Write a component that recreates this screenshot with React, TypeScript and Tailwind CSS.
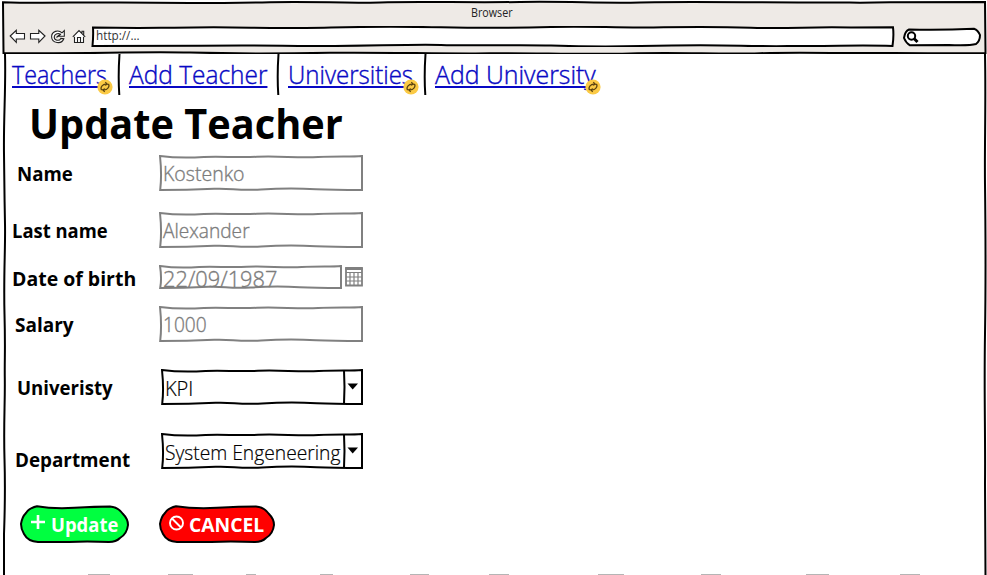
import { useLayoutEffect, useRef, useState } from "react";
import type { ReactNode } from "react";

/** A single line of text, condensed or widened to an exact width. */
function Fit({ w, className = "", children }: { w: number; className?: string; children: ReactNode }) {
  const ref = useRef<HTMLSpanElement>(null);
  const [scale, setScale] = useState(1);
  useLayoutEffect(() => {
    if (ref.current) setScale(w / ref.current.offsetWidth);
  }, [w]);
  return (
    <span className="block whitespace-nowrap" style={{ width: w }}>
      <span ref={ref} className={`inline-block origin-left whitespace-nowrap ${className}`} style={{ transform: `scaleX(${scale})` }}>
        {children}
      </span>
    </span>
  );
}

/** Path of a rectangle with slightly wavering, hand-drawn edges. */
function roughRect(w: number, h: number) {
  const b = h - 1;
  const r = w - 1;
  return `M1 1 C${w * 0.08} 3 ${w * 0.14} 3 ${w * 0.22} 2 S${w * 0.38} 2.8 ${w * 0.48} 1.8 S${w * 0.68} 3 ${w * 0.78} 2 S${w * 0.94} 2 ${r} 1 L${r} ${b} C${w * 0.9} ${b} ${w * 0.85} ${b} ${w * 0.77} ${b - 0.8} S${w * 0.62} ${b - 2} ${w * 0.5} ${b - 0.5} S${w * 0.36} ${b - 2} ${w * 0.27} ${b - 1.2} S${w * 0.1} ${b} 1.2 ${b} Q3 ${h * 0.55} 1 1 Z`;
}

function Box({ w, h, color = "#808080", children }: { w: number; h: number; color?: string; children?: ReactNode }) {
  return (
    <div className="relative shrink-0" style={{ width: w, height: h }}>
      <svg className="absolute inset-0" width={w} height={h} fill="none" stroke={color} strokeWidth="2">
        <path d={roughRect(w, h)} />
      </svg>
      {children}
    </div>
  );
}

function Field({ text, w }: { text: string; w: number }) {
  return (
    <Box w={204} h={36}>
      <div className="relative pt-[7px] pl-1 text-[20px] leading-[24px] font-light text-[#7c7c7c] [-webkit-text-stroke:0.35px]">
        <Fit w={w}>{text}</Fit>
      </div>
    </Box>
  );
}

function Select({ text, w }: { text: string; w: number }) {
  return (
    <Box w={202} h={36} color="#000">
      <svg className="absolute inset-0" width="202" height="36" fill="none" stroke="#000" strokeWidth="2">
        <path d="M183 1Q184 18 183 35" />
        <path d="M186.500 14.500H197L191.700 20.500Z" fill="#000" stroke="none" />
      </svg>
      <div className="relative pt-[8px] pl-[4px] text-[20px] leading-[24px] font-light [-webkit-text-stroke:0.2px]">
        <Fit w={w}>{text}</Fit>
      </div>
    </Box>
  );
}

function Row({ label, w, className, children }: { label: string; w: number; className: string; children: ReactNode }) {
  return (
    <div className={`flex items-start ${className}`}>
      <div className="flex-1 text-[19px] leading-[24px] font-bold">
        <Fit w={w}>{label}</Fit>
      </div>
      <div className="-mt-[7px] w-[204px] shrink-0">{children}</div>
    </div>
  );
}

function LinkBadge() {
  return (
    <svg className="absolute top-[21px] -right-[6px]" width="16" height="16" viewBox="0 0 16 16" fill="none">
      <circle cx="8" cy="8" r="7.600" fill="#fbca45" />
      <g stroke="#5a4210" strokeWidth="1.200">
        <path d="M4.600 11.200C2.800 8.500 5.800 4.300 10 5.200" />
        <path d="M8.300 3.200L10.400 5.300L7.800 6.300" />
        <path d="M11.400 4.800C13.200 7.500 10.200 11.700 6 10.800" />
        <path d="M7.700 12.800L5.600 10.700L8.200 9.700" />
      </g>
    </svg>
  );
}

function NavLink({ text, w, badge }: { text: string; w: number; badge?: boolean }) {
  return (
    <a className="relative block text-[25px] leading-[32px] text-[#0808c4]">
      <Fit w={w} className="font-light underline decoration-[1.5px] underline-offset-[2px] [-webkit-text-stroke:0.4px]">
        {text}
      </Fit>
      {badge && <LinkBadge />}
    </a>
  );
}

function Divider() {
  return (
    <svg className="block h-[41px] w-[4px] shrink-0" viewBox="0 0 4 41" fill="none" stroke="#000" strokeWidth="2">
      <path d="M2.500 0Q1 22 2.300 41" />
    </svg>
  );
}

function Pill({ w, fill, children }: { w: number; fill: string; children: ReactNode }) {
  const d = `M17 1.200 Q${w * 0.3} 4 ${w * 0.5} 2.800 T${w - 19} 1.500 Q${w - 11} 2 ${w - 6} 9 Q${w - 1} 14 ${w - 1} 20 Q${w - 2} 29 ${w - 9} 33 Q${w - 13} 37 ${w - 20} 37 Q${w * 0.6} 36.200 ${w * 0.45} 37 L18 37 Q8 36.500 4 29 Q1 24 1 19 Q2 12 6 8 Q9 3 17 1.200Z`;
  return (
    <button className="relative block h-[38px] text-white" style={{ width: w }}>
      <svg className="absolute inset-0" width={w} height="38">
        <path d={d} fill={fill} stroke="#000" strokeWidth="2" />
      </svg>
      <span className="relative flex h-full items-start">{children}</span>
    </button>
  );
}

const footerMarks = [
  [88, 22], [168, 25], [246, 10], [320, 13], [410, 19], [489, 20], [598, 26], [701, 20], [806, 23], [900, 20],
];

function BrowserBar() {
  return (
    <header className="relative h-[54px]">
      <svg className="absolute inset-0" width="987" height="54" fill="none" stroke="#000" strokeWidth="2">
        <path
          d="M3 2.200C40 3.500 80 2 120 2.500S220 3.200 270 2.200S340 3.500 380 2.400S470 2.800 520 2S600 3.500 640 2.500S760 2.600 810 2.400S850 3.300 890 2.200L985 2L985.500 53C950 54 920 52.600 880 53S800 52 760 53.200S680 52 630 53.400S530 52.500 490 53.300S380 52 330 52.800S240 53.800 190 52.600S80 54 3.500 53Z"
          fill="#eeeae6"
        />
      </svg>
      <div className="relative flex flex-col">
        <div className="flex h-[26px] justify-center pt-[5px] pr-[4px] text-[12px] leading-[16px] text-[#222]">
          <Fit w={42}>Browser</Fit>
        </div>
        <div className="flex h-[21px] items-start pl-[9px]">
          <svg className="mt-[3px] block" width="78" height="16" viewBox="0 0 78 16" fill="#fff" stroke="#222" strokeWidth="1.100">
            <path d="M1.200 7L7.300 1.300V4.500H15.500V10H7.300V13.300Z" />
            <path d="M36 7L29.800 1.300V4.500H21.500V10H29.800V13.300Z" />
            <path d="M55.300 1.500V7.300H49.500L51.500 5.300C48.800 3.400 45.200 5.200 45.200 8C45.200 11.300 50.200 12.700 51.800 9.400L54.800 9.800C52.800 15.600 42.800 14.700 42.600 7.800C42.600 2 49.500 .500 53 3.800Z" />
            <path d="M47.500 8.500L50.500 5.700" />
            <path d="M65.500 7V13.500H74.500V7" />
            <path d="M68.500 13V8.500H71.500V13M63.800 7.800L70 1.500L76.200 7.800M73 4V2.200H74.700V5.700" />
          </svg>
          <div className="relative ml-[4px] h-[21px] w-[804px]">
            <svg className="absolute inset-0" width="804" height="21" fill="#fff" stroke="#000" strokeWidth="2">
              <path d="M2 1.500C30 2 50 2 70 1.800S120 .800 160 1.700S210 2.200 240 1.500S310 .500 350 1.300S420 2.200 460 1S520 2 560 1.500S620 .500 660 1.800S720 .500 760 1.600L802 1.200Q803 10 801.500 20C770 19 750 20 720 20S680 20.500 650 19.700S590 19 550 20S490 20.500 460 19.500S380 20 350 19S270 20.500 220 20S160 19 110 19.700L1.500 20Q2.500 10 2 1.500Z" />
            </svg>
            <div className="relative pt-[2px] pl-[5px] text-[12px] leading-[16px] text-[#333]">
              <Fit w={44}>http://...</Fit>
            </div>
          </div>
          <svg className="mt-[1px] ml-[7px] block" width="80" height="20" viewBox="0 0 80 20" fill="none" stroke="#000" strokeWidth="2">
            <path d="M7 2.500Q38 3.400 72 1.700Q76 3 78 8Q78 14 74 17Q68 18.700 47 18L8 18.300Q4 16 2 11Q3 4 7 2.500Z" fill="#fff" />
            <circle cx="9.500" cy="9" r="3.700" />
            <path d="M12 11.500L15.500 15" strokeWidth="3" />
          </svg>
        </div>
      </div>
    </header>
  );
}

export default function App() {
  return (
    <div className="relative flex h-[575px] w-[987px] flex-col overflow-hidden bg-white font-['Open_Sans','Noto_Sans',sans-serif] text-black">
      <BrowserBar />
      <svg className="absolute top-[54px] left-0" width="987" height="521" fill="none" stroke="#000" strokeWidth="2">
        <path d="M5 0C6 35 3.500 60 4 100S4.500 145 5 170S3.500 220 4.500 260S4.500 300 4.800 325S3.500 370 4.500 405S5 450 4 480L4 521" />
        <path d="M985 0C986 50 984.500 90 985 130S986 220 985 280S985.500 380 985 430L985.500 521" />
      </svg>

      <nav className="relative flex h-[41px] pl-[12px]">
        <div className="w-[105px] pt-[4px]"><div className="w-[95px]"><NavLink text="Teachers" w={95} badge /></div></div>
        <Divider />
        <div className="w-[155px] pt-[4px] pl-[8px]"><NavLink text="Add Teacher" w={138} /></div>
        <Divider />
        <div className="w-[143px] pt-[4px] pl-[8px]"><div className="w-[125px]"><NavLink text="Universities" w={125} badge /></div></div>
        <Divider />
        <div className="pt-[4px] pl-[8px]"><div className="w-[160px]"><NavLink text="Add University" w={161} badge /></div></div>
      </nav>

      <h1 className="h-[67px] pl-[29px] text-[42px] leading-[56px] font-bold">
        <Fit w={314}>Update Teacher</Fit>
      </h1>

      <main className="relative flex w-[363px] flex-col">
        <Row label="Name" w={56} className="h-[57px] pl-[17px]"><Field text="Kostenko" w={82} /></Row>
        <Row label="Last name" w={96} className="h-[48px] pl-[12px]"><Field text="Alexander" w={87} /></Row>
        <Row label="Date of birth" w={124} className="h-[46px] pl-[12px]">
          <div className="flex items-start justify-between pt-[5px]">
            <Box w={183} h={24}>
              <div className="relative pt-px pl-[4px] text-[22px] leading-[24px] font-light text-[#7c7c7c] [-webkit-text-stroke:0.35px]">
                <Fit w={114}>22/09/1987</Fit>
              </div>
            </Box>
            <svg width="18" height="22" viewBox="0 0 18 22" fill="none" stroke="#808080">
              <path d="M1 3.500H17V20.500H1Z" strokeWidth="1.800" />
              <path d="M.200 3.500H17.800" strokeWidth="3" />
              <path d="M1 7.500H17M1 12H17M1 16H17M5 7V20M9 7V20M13 7V20" strokeWidth="1.200" />
            </svg>
          </div>
        </Row>
        <Row label="Salary" w={59} className="h-[63px] pl-[15px]"><Field text="1000" w={44} /></Row>
        <Row label="Univeristy" w={96} className="h-[72px] pl-[17px]">
          <div className="pl-[2px]"><Select text="KPI" w={28} /></div>
        </Row>
        <Row label="Department" w={115} className="h-[57px] pl-[15px]">
          <div className="-mt-[8px] pl-[2px]"><Select text="System Engeneering" w={175} /></div>
        </Row>
        <div className="flex gap-[30px] pl-[20px]">
          <Pill w={109} fill="#00ff40">
            <svg className="mt-[9px] ml-[10px] block" width="16" height="16" stroke="#fff" strokeWidth="2.600">
              <path d="M8 1V15M1 8H15" />
            </svg>
            <span className="mt-[8px] ml-[5px] text-[19px] leading-[24px] font-bold"><Fit w={67}>Update</Fit></span>
          </Pill>
          <Pill w={116} fill="#ff0000">
            <svg className="mt-[10px] ml-[9px] block" width="16" height="16" fill="none" stroke="#fff" strokeWidth="1.900">
              <circle cx="8.500" cy="8" r="6.500" />
              <path d="M4 3.500L13 12.500" />
            </svg>
            <span className="mt-[8px] ml-[5px] text-[19px] leading-[24px] font-bold"><Fit w={75}>CANCEL</Fit></span>
          </Pill>
        </div>
      </main>

      {footerMarks.map(([x, w]) => (
        <i key={x} className="absolute bottom-0 h-px bg-[#b5b5b5]" style={{ left: x, width: w }} />
      ))}
    </div>
  );
}
